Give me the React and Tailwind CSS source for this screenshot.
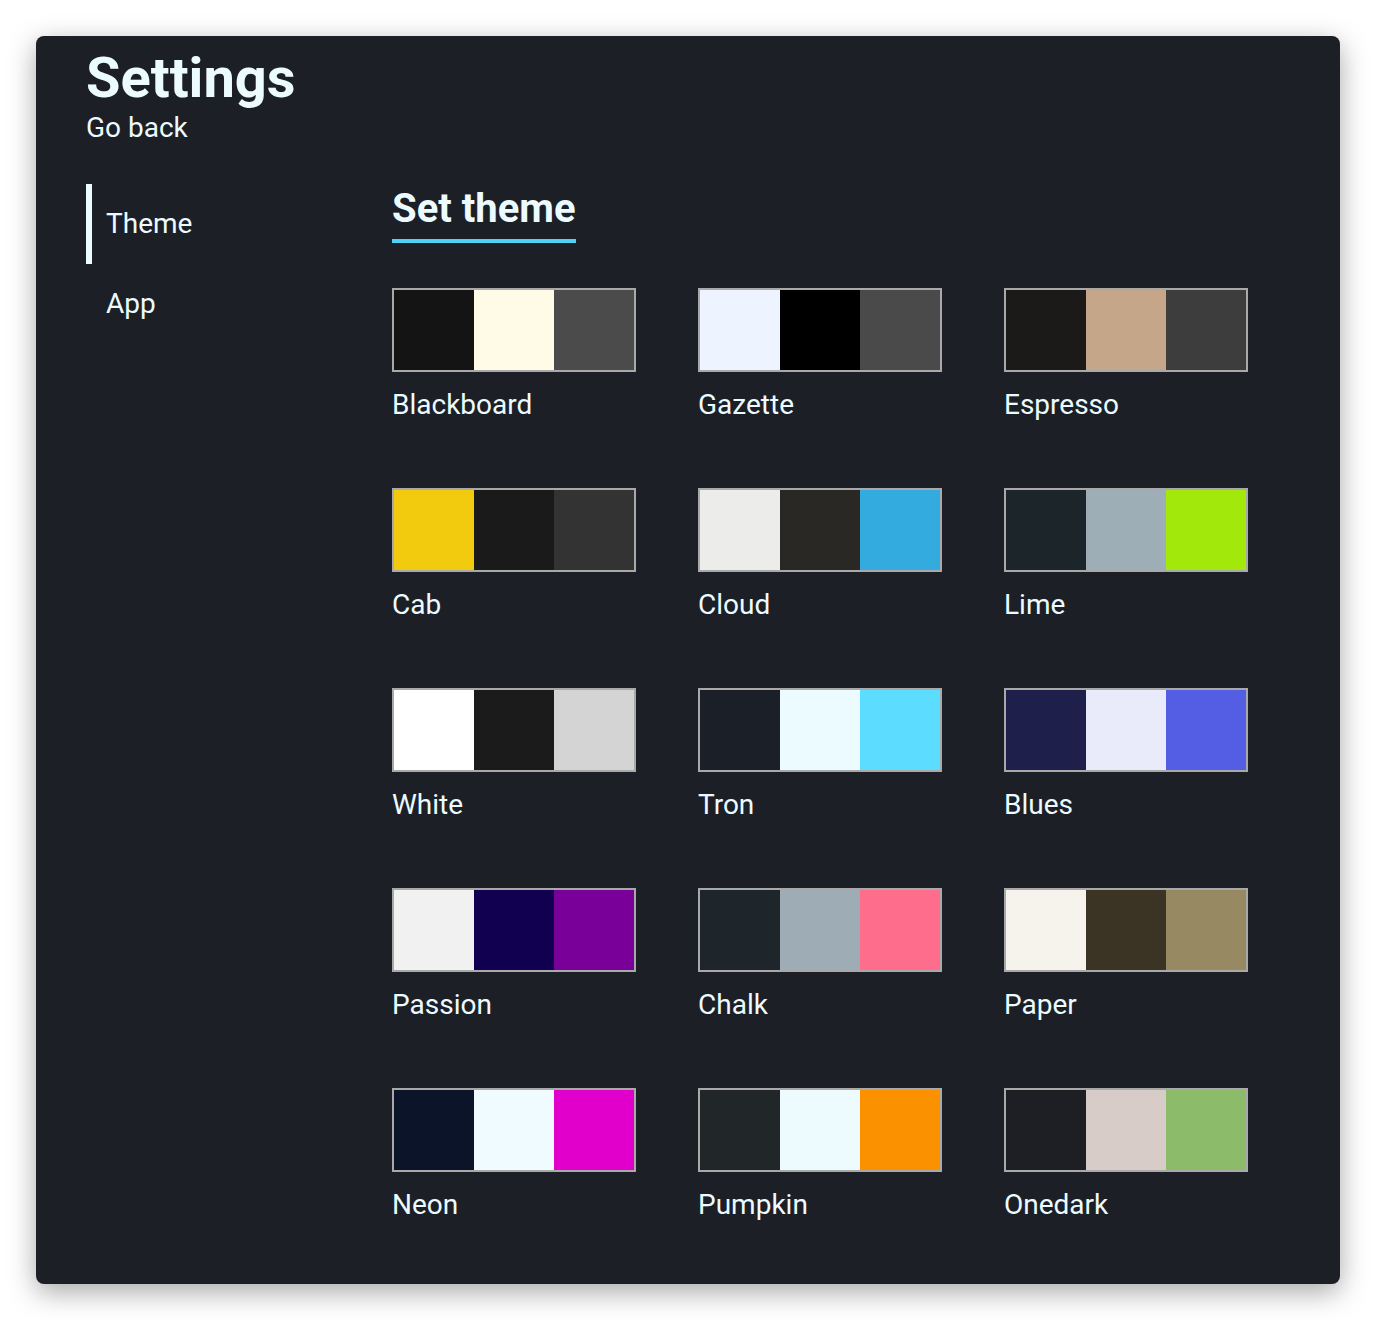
import React from "react";

const themes = [
  ["Blackboard", "#141414", "#fffbe6", "#4b4b4b"],
  ["Gazette", "#eef4ff", "#000000", "#4a4a4a"],
  ["Espresso", "#1b1a18", "#c5a688", "#3d3d3d"],
  ["Cab", "#f2cb0f", "#1a1a1a", "#333333"],
  ["Cloud", "#ecedeb", "#2a2825", "#33abdf"],
  ["Lime", "#1c2529", "#9eaeb6", "#a2e80a"],
  ["White", "#ffffff", "#1b1b1b", "#d4d4d4"],
  ["Tron", "#1b1f27", "#ecfbff", "#5cdcfe"],
  ["Blues", "#1f1f4b", "#e9ebfa", "#535ee5"],
  ["Passion", "#f1f1f2", "#11004f", "#7a009a"],
  ["Chalk", "#1e262b", "#9eadb5", "#ff6d8c"],
  ["Paper", "#f6f3ec", "#3b3425", "#978a62"],
  ["Neon", "#0b1429", "#effbff", "#e100cb"],
  ["Pumpkin", "#212629", "#edfbff", "#fc9100"],
  ["Onedark", "#1d1f25", "#d7ccc8", "#8cbb6a"],
];

export default function App() {
  return (
    <div
      className="bg-white p-[36px] min-h-[1320px]"
      style={{ fontFamily: "Roboto, 'Noto Sans', sans-serif" }}
    >
      <div className="bg-[#1c1f26] rounded-[8px] h-[1248px] pl-[50px] pt-[13px] text-[#ecfbff] shadow-[0_8px_28px_rgba(0,0,0,0.35)]">
        <h1 className="text-[56px] leading-[58px] font-bold">Settings</h1>
        <div className="text-[28px] leading-[42px]">Go back</div>
        <div className="flex mt-[30px]">
          <nav className="w-[306px] mt-[5px] flex flex-col">
            <div className="h-[80px] flex items-center border-l-[6px] border-[#ecfbff] pl-[14px] text-[28px]">
              Theme
            </div>
            <div className="h-[80px] flex items-center pl-[20px] text-[28px]">App</div>
          </nav>
          <main className="flex flex-col items-start">
            <h2 className="text-[40px] leading-[60px] font-bold border-b-[4px] border-[#50d2f5]">
              Set theme
            </h2>
            <div className="grid grid-cols-[244px_244px_244px] gap-x-[62px] gap-y-[62px] mt-[45px]">
              {themes.map(([name, a, b, c]) => (
                <div key={name} className="flex flex-col cursor-pointer">
                  <div className="flex border-2 border-[#a9a9a9] h-[84px]">
                    <div className="w-[80px]" style={{ background: a }} />
                    <div className="w-[80px]" style={{ background: b }} />
                    <div className="w-[80px]" style={{ background: c }} />
                  </div>
                  <div className="mt-[12px] text-[28px] leading-[42px]">{name}</div>
                </div>
              ))}
            </div>
          </main>
        </div>
      </div>
    </div>
  );
}
